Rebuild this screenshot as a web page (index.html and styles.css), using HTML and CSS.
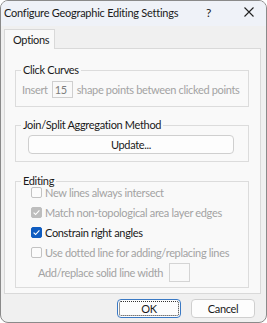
FILE: index.html
```html
<!DOCTYPE html>
<html>
<head>
<meta charset="utf-8">
<link rel="stylesheet" href="styles.css">
</head>
<body>
<div class="window">
  <div class="titlebar">
    <span class="title">Configure Geographic Editing Settings</span>
    <span class="help">?</span>
    <span class="close"><svg width="10" height="10" viewBox="0 0 10 10"><path d="M0.5 0.5L9.5 9.5M9.5 0.5L0.5 9.5" stroke="#222" stroke-width="1.1" fill="none"/></svg></span>
  </div>
  <div class="body">
    <div class="tabs"><div class="tab">Options</div></div>
    <div class="page">
      <div class="group g1">
        <div class="legend">Click Curves</div>
        <div class="insert-row disabled">
          <span>Insert</span><span class="num">15</span><span>shape points between clicked points</span>
        </div>
      </div>
      <div class="group g2">
        <div class="legend">Join/Split Aggregation Method</div>
        <div class="btn wide">Update...</div>
      </div>
      <div class="group g3">
        <div class="legend">Editing</div>
        <div class="checks">
          <div class="check disabled"><span class="box"></span>New lines always intersect</div>
          <div class="check disabled"><span class="box grey"><svg width="9" height="9" viewBox="0 0 9 9"><path d="M1.6 4.6L3.6 6.5L7.4 2.4" stroke="#fff" stroke-width="1.1" fill="none"/></svg></span>Match non-topological area layer edges</div>
          <div class="check"><span class="box blue"><svg width="9" height="9" viewBox="0 0 9 9"><path d="M1.6 4.6L3.6 6.5L7.4 2.4" stroke="#fff" stroke-width="1.1" fill="none"/></svg></span>Constrain right angles</div>
          <div class="check disabled"><span class="box"></span>Use dotted line for adding/replacing lines</div>
          <div class="width-row disabled"><span>Add/replace solid line width</span><span class="wbox"></span></div>
        </div>
      </div>
    </div>
    <div class="buttons">
      <div class="btn ok">OK</div>
      <div class="btn cancel">Cancel</div>
    </div>
  </div>
</div>
</body>
</html>
```

FILE: styles.css
```css
html, body {
  margin: 0;
  padding: 0;
  background: #ffffff;
}
body {
  font-family: Lato, "Open Sans", sans-serif;
  font-size: 11px;
  letter-spacing: -0.33px;
  color: #1a1a1a;
  white-space: nowrap;
}
.window {
  width: 265px;
  height: 321px;
  border: 1px solid #8a8a8a;
  border-radius: 8px;
  overflow: hidden;
  background: #f0f0f0;
  display: flex;
  flex-direction: column;
}
.titlebar {
  height: 25px;
  background: #eff2f8;
  display: flex;
  align-items: center;
  padding-left: 3px;
}
.title {
  flex: 1;
  font-size: 11px;
  letter-spacing: -0.25px;
  color: #1a1a1a;
  margin-top: -2px;
}
.help {
  width: 38px;
  font-size: 12px;
  margin-top: -2px;
}
.close {
  width: 22px;
  display: flex;
  margin-top: -4px;
}
.body {
  flex: 1;
  padding: 3px 5px 0 3px;
  display: flex;
  flex-direction: column;
}
.tabs {
  display: flex;
  height: 19px;
}
.tab {
  width: 51px;
  height: 20px;
  background: #f9f9f9;
  border: 1px solid #d9d9d9;
  border-bottom: none;
  box-sizing: border-box;
  padding: 3px 0 0 8px;
  position: relative;
  z-index: 1;
}
.page {
  height: 246px;
  background: #f9f9f9;
  border: 1px solid #d9d9d9;
  box-sizing: border-box;
  padding: 21px 11px 0 10px;
}
.group {
  border: 1px solid #dcdcdc;
  box-sizing: border-box;
}
.legend {
  width: fit-content;
  margin: -9px 0 0 5px;
  padding: 0 2px;
  background: #f9f9f9;
  line-height: 16px;
  color: #1a1a1a;
}
.g1 {
  height: 37px;
}
.insert-row {
  display: flex;
  align-items: center;
  padding: 3px 0 0 6px;
  gap: 4px;
}
.disabled {
  color: #a3a3a3;
}
.num {
  width: 21px;
  height: 17px;
  border: 1px solid #cfcfcf;
  box-sizing: border-box;
  color: #7d7d7d;
  padding-left: 2px;
  line-height: 15px;
}
.g2 {
  margin-top: 18px;
  height: 37px;
  padding: 0 14px 0 12px;
}
.g2 .legend {
  margin-left: -7px;
}
.wide {
  margin-top: 2px;
}
.btn {
  background: #fdfdfd;
  border: 1px solid #cfcfcf;
  border-radius: 4px;
  display: flex;
  align-items: center;
  justify-content: center;
  box-sizing: border-box;
  height: 19px;
  color: #1a1a1a;
}
.g3 {
  margin-top: 19px;
  height: 107px;
}
.checks {
  margin-top: -7px;
  padding-left: 15px;
}
.check {
  display: flex;
  align-items: center;
  height: 20px;
}
.box {
  width: 11px;
  height: 11px;
  border: 1px solid #c2c2c2;
  border-radius: 2px;
  box-sizing: border-box;
  margin-right: 3px;
  background: #fbfbfb;
  display: flex;
  align-items: center;
  justify-content: center;
}
.box.grey {
  background: #bdbdbd;
  border-color: #bdbdbd;
}
.box.blue {
  background: #0f5cc0;
  border-color: #0f5cc0;
}
.width-row {
  display: flex;
  align-items: center;
  height: 20px;
  padding-left: 7px;
  gap: 6px;
}
.wbox {
  width: 21px;
  height: 19px;
  border: 1px solid #d4d4d4;
  box-sizing: border-box;
  background: #f9f9f9;
}
.buttons {
  display: flex;
  justify-content: flex-end;
  gap: 10px;
  padding: 5px 6px 0 0;
}
.ok, .cancel {
  width: 64px;
  height: 19px;
}
.ok {
  border: 1px solid #3a79c4;
  outline: 1px dotted #333;
  outline-offset: -3px;
}
```
